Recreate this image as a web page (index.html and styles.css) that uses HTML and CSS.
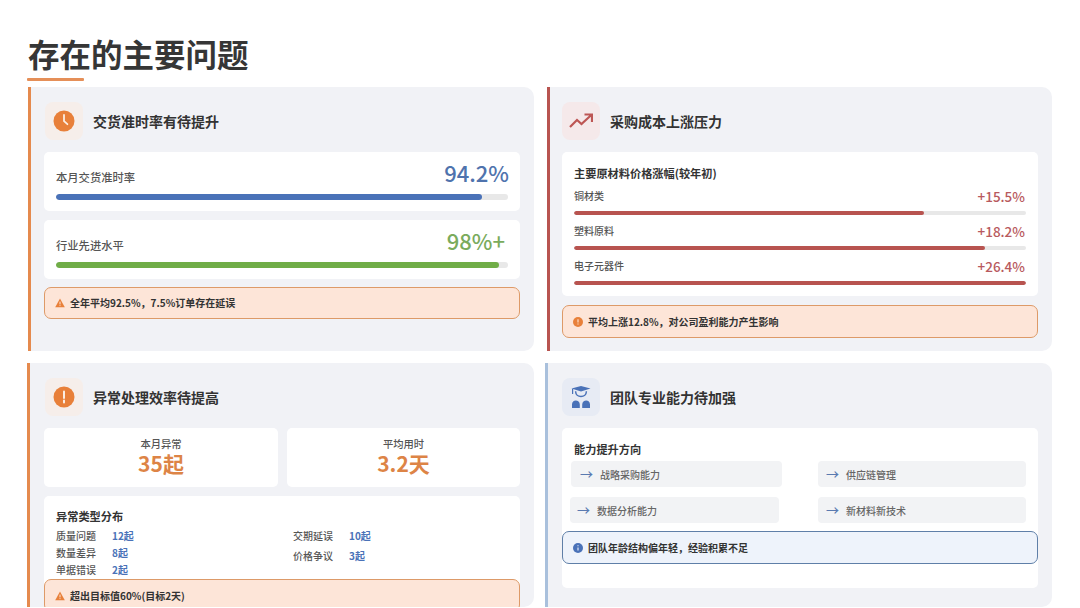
FILE: index.html
```html
<!DOCTYPE html>
<html lang="zh">
<head>
<meta charset="utf-8">
<title>存在的主要问题</title>
<link rel="stylesheet" href="styles.css">
</head>
<body>
<main class="page">
  <header class="head">
    <h1 class="title">存在的主要问题</h1>
    <div class="rule"></div>
  </header>
  <div class="grid">
    <section class="card card-orange">
      <div class="card-head">
        <div class="icon-box box-orange">
          <svg width="22" height="22" viewBox="0 0 22 22"><circle cx="11" cy="11" r="10.5" fill="#e8803a"/><path d="M11 5v6.200l3.400 3" fill="none" stroke="#fbeee4" stroke-width="1.800" stroke-linecap="round" stroke-linejoin="round"/></svg>
        </div>
        <h2 class="card-title">交货准时率有待提升</h2>
      </div>
      <div class="panel metric">
        <div class="metric-top"><span class="metric-label">本月交货准时率</span><span class="metric-value blue">94.2%</span></div>
        <div class="track thick"><div class="fill fill-blue" style="width:94.2%"></div></div>
      </div>
      <div class="panel metric">
        <div class="metric-top"><span class="metric-label">行业先进水平</span><span class="metric-value green">98%+</span></div>
        <div class="track thick"><div class="fill fill-green" style="width:98%"></div></div>
      </div>
      <div class="alert alert-orange alert-short">
        <svg width="10" height="10" viewBox="0 0 10 10"><path d="M5 .6 9.800 9.200H.2z" fill="#e8803a"/><path d="M5 3.600v2.800M5 7.200v.9" stroke="#fde5d8" stroke-width="1"/></svg>
        <span>全年平均92.5%，7.5%订单存在延误</span>
      </div>
    </section>

    <section class="card card-red">
      <div class="card-head">
        <div class="icon-box box-red">
          <svg width="24" height="16" viewBox="0 0 24 16"><path d="M1 14 8 7l4.500 4L22 2.200M15.500 1.500H23V9" fill="none" stroke="#bd5654" stroke-width="2.200"/></svg>
        </div>
        <h2 class="card-title">采购成本上涨压力</h2>
      </div>
      <div class="panel prices">
        <h3 class="panel-title">主要原材料价格涨幅(较年初)</h3>
        <div class="price">
          <div class="price-top"><span class="price-label">铜材类</span><span class="price-value">+15.5%</span></div>
          <div class="track"><div class="fill fill-red" style="width:77.5%"></div></div>
        </div>
        <div class="price">
          <div class="price-top"><span class="price-label">塑料原料</span><span class="price-value">+18.2%</span></div>
          <div class="track"><div class="fill fill-red" style="width:91%"></div></div>
        </div>
        <div class="price">
          <div class="price-top"><span class="price-label">电子元器件</span><span class="price-value">+26.4%</span></div>
          <div class="track"><div class="fill fill-red" style="width:100%"></div></div>
        </div>
      </div>
      <div class="alert alert-orange alert-gap">
        <svg width="10" height="10" viewBox="0 0 10 10"><circle cx="5" cy="5" r="5" fill="#e8803a"/><path d="M5 2.300v3.200M5 6.600v1" stroke="#fde5d8" stroke-width="1.100"/></svg>
        <span>平均上涨12.8%，对公司盈利能力产生影响</span>
      </div>
    </section>

    <section class="card card-orange shift-left">
      <div class="card-head">
        <div class="icon-box box-orange">
          <svg width="22" height="22" viewBox="0 0 22 22"><circle cx="11" cy="11" r="10.5" fill="#e8803a"/><path d="M11 5.500v6.500M11 14.600v2" stroke="#fbeee4" stroke-width="2" stroke-linecap="round"/></svg>
        </div>
        <h2 class="card-title">异常处理效率待提高</h2>
      </div>
      <div class="stats">
        <div class="panel stat"><div class="stat-label">本月异常</div><div class="stat-value">35起</div></div>
        <div class="panel stat"><div class="stat-label">平均用时</div><div class="stat-value">3.2天</div></div>
      </div>
      <div class="panel types">
        <h3 class="panel-title">异常类型分布</h3>
        <div class="type-cols">
          <div class="type-col">
            <div class="type"><span class="type-label">质量问题</span><span class="type-value">12起</span></div>
            <div class="type"><span class="type-label">数量差异</span><span class="type-value">8起</span></div>
            <div class="type"><span class="type-label">单据错误</span><span class="type-value">2起</span></div>
          </div>
          <div class="type-col wide">
            <div class="type"><span class="type-label">交期延误</span><span class="type-value">10起</span></div>
            <div class="type"><span class="type-label">价格争议</span><span class="type-value">3起</span></div>
          </div>
        </div>
      </div>
      <div class="alert alert-orange alert-tight">
        <svg width="10" height="10" viewBox="0 0 10 10"><path d="M5 .6 9.800 9.200H.2z" fill="#e8803a"/><path d="M5 3.600v2.800M5 7.200v.9" stroke="#fde5d8" stroke-width="1"/></svg>
        <span>超出目标值60%(目标2天)</span>
      </div>
    </section>

    <section class="card card-blue shift-left">
      <div class="card-head">
        <div class="icon-box box-blue">
          <svg width="20" height="24" viewBox="0 0 20 24"><path d="M10 1 19.500 3.600 10 6.400 .5 3.600z" fill="#4a72b8"/><path d="M1.600 4v5" stroke="#4a72b8" stroke-width="1.200"/><path d="M4.600 6.200c0 7 10.800 7 10.800 0" fill="none" stroke="#4a72b8" stroke-width="1.500"/><path d="M1 23v-3.500C1 17 2.800 15.500 4.800 15.500S8.800 17 8.800 19.500V23zM11.200 23v-3.500c0-2.500 2-4 4-4s3.800 1.500 3.800 4V23z" fill="#4a72b8"/></svg>
        </div>
        <h2 class="card-title">团队专业能力待加强</h2>
      </div>
      <div class="panel skills">
        <h3 class="panel-title">能力提升方向</h3>
        <div class="skill-grid">
          <div class="skill skill-a"><span class="arrow">→</span><span>战略采购能力</span></div>
          <div class="skill"><span class="arrow">→</span><span>供应链管理</span></div>
          <div class="skill skill-b"><span class="arrow">→</span><span>数据分析能力</span></div>
          <div class="skill"><span class="arrow">→</span><span>新材料新技术</span></div>
        </div>
        <div class="alert alert-blue">
          <svg width="10" height="10" viewBox="0 0 10 10"><circle cx="5" cy="5" r="5" fill="#4a72b8"/><path d="M5 4.400v3.200M5 2.300v1" stroke="#eef3fb" stroke-width="1.100"/></svg>
          <span>团队年龄结构偏年轻，经验积累不足</span>
        </div>
      </div>
    </section>
  </div>
</main>
</body>
</html>
```
FILE: styles.css
```css
* { box-sizing: border-box; }
html, body { margin: 0; padding: 0; background: #fff; }
body {
  width: 1080px;
  height: 608px;
  overflow: hidden;
  font-family: "Noto Sans CJK SC", "Noto Sans", sans-serif;
  color: #333;
}
h1, h2, h3 { margin: 0; }
.page { padding: 34px 28px 0 28px; }
.head { height: 53px; }
.title { font-size: 31.500px; line-height: 38px; font-weight: 700; color: #363636; }
.rule { width: 57px; height: 3px; margin: 6px 0 0 -1px; background: #e58f58; border-radius: 1px; }
.grid {
  display: grid;
  grid-template-columns: 506px 505px;
  grid-template-rows: 264px 244px;
  column-gap: 13px;
  row-gap: 12px;
}
.card {
  background: #f1f2f6;
  border-radius: 0 10px 10px 0;
  border-left: 3px solid #e58a4e;
  padding: 15px 14px 0 13px;
  min-width: 0;
  overflow: hidden;
}
.card-red { border-left-color: #b85450; padding-left: 12px; }
.card-blue { border-left-color: #a9c0dc; padding-left: 14px; }
.shift-left { margin-left: -1px; padding-left: 14px; }
.card-blue.shift-left { margin-left: -2px; }
.card-head { display: flex; align-items: center; gap: 10px; height: 38px; margin-bottom: 12px; }
.icon-box { width: 38px; height: 38px; border-radius: 8px; display: flex; align-items: center; justify-content: center; }
.box-orange { background: #f6eeea; margin-left: 1px; }
.box-red { background: #f5e9ea; }
.box-blue { background: #e7ebf4; }
.card-title { font-size: 14px; line-height: 20px; font-weight: 700; color: #333; }
.panel { background: #fff; border-radius: 5px; }
.metric { height: 59px; padding: 8px 12px 0; margin-bottom: 9px; }
.metric-top { display: flex; justify-content: space-between; align-items: flex-start; height: 31px; }
.metric-label { font-size: 11.300px; line-height: 16px; font-weight: 500; color: #555; margin-top: 9px; }
.metric-value { font-size: 22px; line-height: 24px; font-weight: 500; margin-right: -1px; }
.blue { color: #4f73ad; }
.green { color: #7aab5c; margin-right: 3px; }
.track { height: 4px; background: #e8e8e8; border-radius: 2px; overflow: hidden; }
.track.thick { height: 6px; border-radius: 3px; margin-top: 3px; }
.fill { height: 100%; border-radius: 3px; }
.fill-blue { background: #4a72b8; }
.fill-green { background: #70ad47; }
.fill-red { background: #b85450; }
.alert {
  display: flex;
  align-items: center;
  gap: 5px;
  height: 33px;
  padding: 0 10px;
  border-radius: 7px;
  font-size: 10px;
  line-height: 14px;
  font-weight: 700;
  color: #333;
}
.alert-orange { background: #fde5d8; border: 1px solid #dd9a68; }
.alert-short { margin-top: -1px; height: 32px; }
.alert-blue { background: #eef3fb; border: 1px solid #5f7fa8; margin: 8px -12px 0; }
.prices { height: 144px; padding: 13px 12px 0; }
.panel-title { font-size: 11.200px; line-height: 16px; font-weight: 700; color: #333; }
.price { margin-top: 5px; height: 32px; }
.price + .price { margin-top: 3px; }
.price-top { display: flex; justify-content: space-between; align-items: center; height: 22px; margin-bottom: 3px; }
.price-label { font-size: 10px; line-height: 14px; font-weight: 500; color: #555; margin-top: -3px; }
.price-value { font-size: 13.500px; line-height: 18px; font-weight: 500; color: #b85a5e; margin: -2px 1px 0 0; }
.alert-gap { margin-top: 9px; }
.stats { display: grid; grid-template-columns: 234px 233px; column-gap: 9px; margin-bottom: 9px; }
.stat { height: 59px; text-align: center; padding-top: 9px; }
.stat-label { font-size: 10.300px; line-height: 14px; font-weight: 500; color: #555; }
.stat-value { font-size: 21px; line-height: 25px; font-weight: 700; color: #dd8446; }
.types { height: 92px; padding: 12px 12px 0; }
.types .panel-title { margin-bottom: 3px; }
.type-cols { display: flex; }
.type-col { flex: none; width: 237px; }
.type-col.wide { width: 200px; }
.type { display: flex; height: 17px; align-items: center; font-size: 10px; line-height: 14px; font-weight: 500; }
.type-col.wide .type + .type { margin-top: 3px; }
.type-label { width: 56px; color: #555; }
.type-value { color: #4a72b8; font-weight: 700; }
.alert-tight { margin-top: -9px; position: relative; }
.skills { height: 160px; padding: 13px 12px 0; }
.skill-grid {
  display: grid;
  grid-template-columns: 208px 208px;
  column-gap: 36px;
  row-gap: 10px;
  margin-top: 4px;
}
.skill {
  display: flex;
  align-items: center;
  gap: 7px;
  height: 26px;
  padding-left: 8px;
  background: #f2f3f5;
  border-radius: 4px;
  font-size: 10px;
  font-weight: 500;
  color: #666;
}
.skill-a { margin-left: -3px; padding-left: 9px; }
.skill-b { margin-left: -4px; margin-right: 3px; padding-left: 7px; }
.arrow { color: #5a7ab0; font-size: 13px; line-height: 14px; }
```
